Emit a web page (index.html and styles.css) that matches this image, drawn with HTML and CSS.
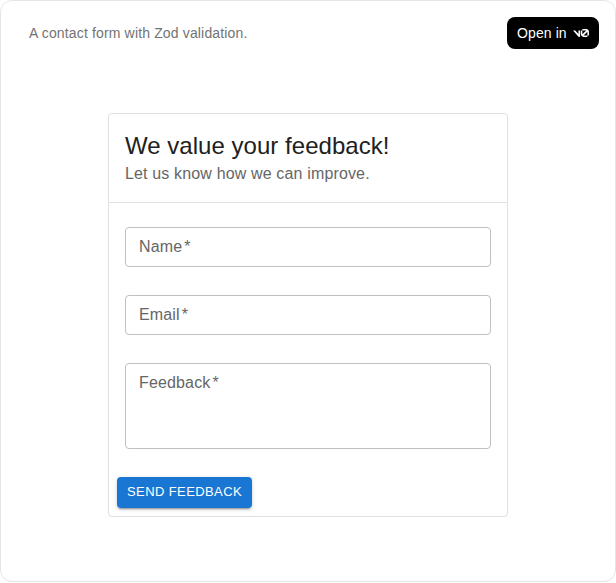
FILE: index.html
```html
<!DOCTYPE html>
<html lang="en">
<head>
<meta charset="utf-8">
<title>Feedback form</title>
<link rel="stylesheet" href="styles.css">
</head>
<body>
<main class="frame">
  <header class="topbar">
    <p class="description">A contact form with Zod validation.</p>
    <a class="open-in">
      <span class="open-label">Open in</span>
      <svg class="logo" viewBox="0 0 40 20" fill="currentColor" aria-hidden="true">
        <path d="M23.3919 0H32.9188C36.7819 0 39.9136 3.13165 39.9136 6.99475V16.0805H36.0006V6.99475C36.0006 6.90167 35.9969 6.80925 35.9898 6.71766L26.4628 16.079C26.4949 16.08 26.5272 16.0805 26.5595 16.0805H36.0006V19.7762H26.5595C22.6964 19.7762 19.4788 16.6139 19.4788 12.7508V3.68923H23.3919V12.7508C23.3919 12.9253 23.4054 13.0977 23.4316 13.2668L33.1682 3.6995C33.0861 3.6927 33.003 3.68923 32.9188 3.68923H23.3919V0Z"/>
        <path d="M13.7688 19.0956L0 3.68759H5.53933L13.6231 12.7337V3.68759H17.7535V17.5746C17.7535 19.6705 15.1654 20.6584 13.7688 19.0956Z"/>
      </svg>
    </a>
  </header>
  <section class="card">
    <div class="card-header">
      <h1 class="title">We value your feedback!</h1>
      <p class="subtitle">Let us know how we can improve.</p>
    </div>
    <form class="form">
      <div class="field"><span class="label">Name<span class="asterisk">*</span></span></div>
      <div class="field"><span class="label">Email<span class="asterisk">*</span></span></div>
      <div class="field field-multiline"><span class="label">Feedback<span class="asterisk">*</span></span></div>
    </form>
    <div class="actions">
      <button class="submit" type="button">SEND FEEDBACK</button>
    </div>
  </section>
</main>
</body>
</html>
```
FILE: styles.css
```css
* { box-sizing: border-box; margin: 0; }
body {
  background: #fff;
  font-family: "Liberation Sans", Arial, sans-serif;
}
.frame {
  height: 582px;
  border: 1px solid #e5e5e5;
  border-radius: 12px;
  padding: 16px;
}
.topbar {
  display: flex;
  align-items: center;
  justify-content: space-between;
  height: 32px;
  padding-left: 12px;
}
.description {
  font-size: 14px;
  line-height: 20px;
  letter-spacing: 0.15px;
  color: #737373;
}
.open-in {
  display: flex;
  align-items: center;
  justify-content: space-between;
  width: 92px;
  height: 32px;
  padding: 0 10px;
  border-radius: 8px;
  background: #000;
  color: #fff;
  font-size: 14px;
  line-height: 20px;
}
.open-label { letter-spacing: 0.1px; }
.logo { width: 16px; height: 8px; }
.card {
  width: 400px;
  height: 404px;
  margin: 64px auto 0;
  border: 1px solid #e0e0e0;
  border-radius: 4px;
}
.card-header {
  height: 89px;
  padding: 16px;
  border-bottom: 1px solid #e0e0e0;
}
.title {
  font-size: 24px;
  font-weight: 400;
  line-height: 32px;
  letter-spacing: 0.03px;
  color: #212121;
}
.subtitle {
  font-size: 16px;
  line-height: 24px;
  letter-spacing: 0.15px;
  color: #666;
}
.form {
  display: flex;
  flex-direction: column;
  gap: 28px;
  padding: 24px 16px 0;
}
.field {
  height: 40px;
  padding: 7px 13px;
  border: 1px solid #c0c0c0;
  border-radius: 4px;
  color: #666;
  font-size: 16px;
  line-height: 23px;
  letter-spacing: 0.15px;
}
.field-multiline { height: 86px; }
.asterisk { margin-left: 2px; }
.actions { padding: 28px 8px 8px; }
.submit {
  display: block;
  width: 135px;
  height: 31px;
  padding: 0 0 2px;
  border: 0;
  border-radius: 4px;
  background: #1976d2;
  color: #fff;
  font: 13px/23px "Liberation Sans", Arial, sans-serif;
  letter-spacing: 0.4px;
  box-shadow: 0 3px 1px -2px rgba(0,0,0,.2), 0 2px 2px rgba(0,0,0,.14), 0 1px 5px rgba(0,0,0,.12);
}
```
